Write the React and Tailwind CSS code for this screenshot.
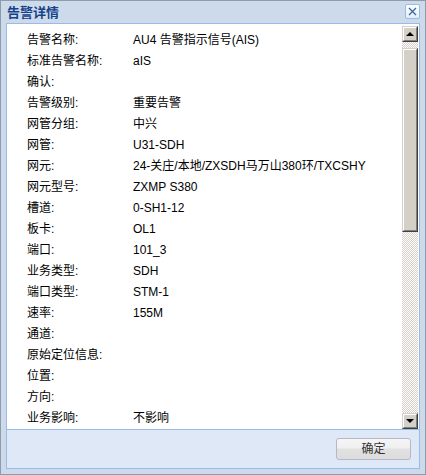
import React from 'react';

// 告警详情弹窗（旧式 ExtJS 风格）
const rows = [
  ['告警名称:', 'AU4 告警指示信号(AIS)'],
  ['标准告警名称:', 'aIS'],
  ['确认:', ''],
  ['告警级别:', '重要告警'],
  ['网管分组:', '中兴'],
  ['网管:', 'U31-SDH'],
  ['网元:', '24-关庄/本地/ZXSDH马万山380环/TXCSHY'],
  ['网元型号:', 'ZXMP S380'],
  ['槽道:', '0-SH1-12'],
  ['板卡:', 'OL1'],
  ['端口:', '101_3'],
  ['业务类型:', 'SDH'],
  ['端口类型:', 'STM-1'],
  ['速率:', '155M'],
  ['通道:', ''],
  ['原始定位信息:', ''],
  ['位置:', ''],
  ['方向:', ''],
  ['业务影响:', '不影响'],
];

const font = { fontFamily: '"Liberation Sans", "Noto Sans CJK SC", sans-serif' };

function ClassicButton({ dir }) {
  return (
    <div className="w-[16px] h-[16px] shrink-0 bg-[#d4d0c8] border-t border-l border-[#d4d0c8] border-r border-b border-r-[#404040] border-b-[#404040]">
      <div className="w-full h-full border-t border-l border-white border-r border-b border-r-[#808080] border-b-[#808080] flex items-center justify-center">
        {dir === 'up' ? (
          <div className="w-0 h-0 border-l-[4px] border-r-[4px] border-b-[4px] border-l-transparent border-r-transparent border-b-black" />
        ) : (
          <div className="w-0 h-0 border-l-[4px] border-r-[4px] border-t-[4px] border-l-transparent border-r-transparent border-t-black" />
        )}
      </div>
    </div>
  );
}

export default function App() {
  return (
    <div
      className="w-[426px] h-[475px] border border-[#8b9bb0] bg-[#cddaea] flex flex-col px-[5px] pb-[5px]"
      style={font}
    >
      {/* 标题栏 */}
      <div className="h-[22px] shrink-0 flex items-center justify-between pl-[1px]">
        <span className="text-[13px] font-bold text-[#15428b] leading-none">告警详情</span>
        <div className="w-[15px] h-[15px] mb-[1px] rounded-[2px] border border-[#99bbe8] bg-gradient-to-b from-white to-[#e4ecf7] flex items-center justify-center">
          <svg width="9" height="9" viewBox="0 0 9 9">
            <path d="M1 1 L8 8 M8 1 L1 8" stroke="#3a68a8" strokeWidth="1.3" />
          </svg>
        </div>
      </div>

      {/* 主体 */}
      <div className="flex-1 min-h-0 border border-[#99bbe8] flex flex-col">
        <div className="flex-1 min-h-0 bg-white flex border-b border-[#99bbe8]">
          <div className="flex-1 min-w-0 overflow-hidden pt-[5px] pl-[20px]">
            {rows.map(([label, value]) => (
              <div key={label} className="h-[21px] flex items-center text-[12px] text-black whitespace-nowrap">
                <span className="w-[106px] shrink-0">{label}</span>
                <span>{value}</span>
              </div>
            ))}
          </div>

          {/* 滚动条 */}
          <div className="w-[16px] shrink-0 mr-[1px] mt-[2px] flex flex-col">
            <ClassicButton dir="up" />
            <div className="flex-1 flex flex-col bg-[repeating-conic-gradient(#d4d0c8_0_25%,#ffffff_0_50%)] bg-[length:2px_2px]">
              <div className="h-[6px]" />
              <div className="h-[184px] bg-[#d4d0c8] border-t border-l border-[#d4d0c8] border-r border-b border-r-[#404040] border-b-[#404040]">
                <div className="w-full h-full border-t border-l border-white border-r border-b border-r-[#808080] border-b-[#808080]" />
              </div>
            </div>
            <ClassicButton dir="down" />
          </div>
        </div>

        {/* 底部按钮栏 */}
        <div className="h-[38px] shrink-0 bg-[#dfe8f6] flex items-center justify-end pr-[8px]">
          <button
            type="button"
            className="w-[75px] h-[22px] rounded-[3px] border border-[#b5b8c8] bg-[linear-gradient(#f5f5f5_0%,#f0f0f0_45%,#e1e1e1_50%,#dcdcdc_100%)] text-[12px] text-[#333] leading-none"
          >
            确定
          </button>
        </div>
      </div>
    </div>
  );
}
